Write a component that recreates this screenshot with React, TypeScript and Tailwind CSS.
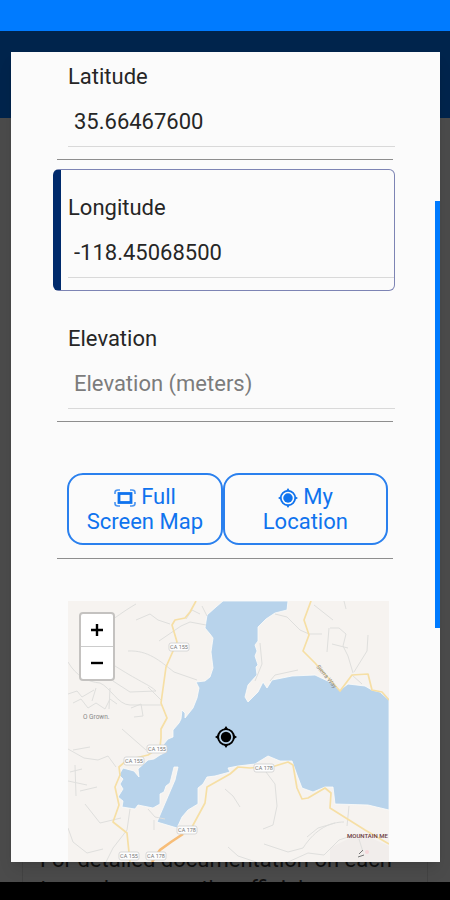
import { useState } from "react";
import type { InputHTMLAttributes } from "react";

const ROADS = [
  "M128 0L122 11L117 17L107 19L104 24L109 41L98 66L93 102L99 117L93 128L93 137L92 146L80 154L59 159L51 166L52 174L47 186L51 204L45 221L59 232L62 261",
  "M115 233L124 226L137 202L139 186L162 173L170 166L182 167L207 165L220 161L225 164L229 187L234 198L240 197L257 187L263 192L262 207L297 229L321 243",
  "M243 0L236 19L241 34L235 50L247 62L272 90L284 74L300 73L304 89L314 91L321 99",
];

const TRAILS = [
  "M38 22C48 17 54 11 68 3M44 63C70 80 82 84 88 90L62 91L45 80M0 61C8 75 20 81 32 82C42 86 50 104 62 104L93 104",
  "M60 50C80 49 92 60 106 71L129 79M68 19L82 13L90 19L102 23M91 40L113 25L122 21L138 24M80 86L93 99M118 18L124 9L132 13M134 5L139 15",
  "M0 93L9 90L14 96L26 89M5 102L13 98L20 107L28 102L37 108L42 98L49 103M28 87L24 100M42 87L41 108M63 107L73 103L75 115L66 116",
  "M0 148L16 157L30 159L40 155L48 166M54 128L78 149M17 203L32 222L53 217M62 208L59 229L45 247L38 261M0 227L5 241L19 252L35 248",
  "M7 164L8 195M0 180L19 184M2 171L14 168M12 190L29 186M5 149L22 146",
  "M207 13L219 16L232 29L241 33L254 33M246 4L265 19M276 0L278 8M262 27H271L278 33L275 45L280 55L285 72M264 43L280 47M300 34L299 50L286 71M261 27L259 51",
  "M202 80L207 74L230 69M192 42L194 63L187 80M284 74L294 83",
  "M157 188L165 195L172 206M198 171L207 183L209 205L205 224L195 228M196 243L220 251L235 247C248 227 263 221 276 221",
  "M239 236L250 227L267 222M281 205L279 225M220 261L240 252L256 254L271 239L286 234M160 246L170 255L188 261M291 238L295 251M80 208L87 216L97 218M86 219L86 229",
];

const WATER =
  "M155 0L148 6L139 14L137 27L142 33L145 37L143 51L145 67L142 76L137 80L128 81L131 87L129 97L125 107L121 112L117 117L117 112L114 109L113 118L111 122L105 129L105 136L100 138L95 144L98 151L92 154L86 158L80 159L70 168L71 176L66 170L55 167L51 174L55 178L52 183L55 188L50 196L55 200L54 206L67 208L70 204L85 207L92 203L92 193L96 191L98 185L102 182L106 166L110 166L107 179L95 207L89 221L109 227L114 216L120 209L130 203L130 187L135 183L139 176L147 175L162 171L160 167L170 165L187 163L200 155L212 160L224 160L229 174L234 187L245 191L257 186L265 186L267 203L300 204L321 209V99L312 91L304 89L297 85L280 83L272 89L264 82L247 74L224 75L204 79L199 87L195 81L190 91L180 101L177 96L180 84L189 74L188 66L190 64L187 55L189 50L187 44L190 40L190 26L198 18L207 12L219 9L220 0Z";

const SHIELDS = [
  { x: 111, y: 46, name: "CA 155" },
  { x: 89, y: 148, name: "CA 155" },
  { x: 66, y: 160, name: "CA 155" },
  { x: 119, y: 229, name: "CA 178" },
  { x: 196, y: 167, name: "CA 178" },
  { x: 61, y: 255, name: "CA 155" },
  { x: 88, y: 255, name: "CA 178" },
];

interface CoordinateFieldProps extends InputHTMLAttributes<HTMLInputElement> {
  id: string;
  label: string;
}

const CoordinateField = ({ id, label, ...props }: CoordinateFieldProps) => (
  <div className="flex flex-col">
    <label htmlFor={id} className="pt-0.5 text-[22px] leading-8">
      {label}
    </label>
    <input
      id={id}
      className="mt-1 h-[50px] w-full border-b border-[#d9d9d9] bg-transparent px-1.5 text-[22px] outline-none placeholder:text-[#7c7c7c]"
      {...props}
    />
  </div>
);

const FullScreenIcon = () => (
  <svg className="inline h-5 w-[22px] align-[-4px]" viewBox="0 0 22 20" fill="none" stroke="currentColor">
    <path
      strokeWidth="1.6"
      strokeOpacity="0.75"
      d="M1 6V4.5Q1 2 4 2H6M16 2H18Q21 2 21 4.5V6M21 14V15.5Q21 18 18 18H16M6 18H4Q1 18 1 15.5V14"
    />
    <rect x="5" y="5.5" width="12" height="9" strokeWidth="2.8" />
  </svg>
);

const LocateIcon = ({ className }: { className: string }) => (
  <svg className={className} viewBox="0 0 22 22" fill="currentColor">
    <circle cx="11" cy="11" r="7.9" fill="none" stroke="currentColor" strokeWidth="1.9" />
    <circle cx="11" cy="11" r="5.2" />
    <path d="M11 0L13 3H9ZM11 22L9 19H13ZM0 11L3 9V13ZM22 11L19 13V9Z" />
  </svg>
);

const LakeMap = () => {
  const [zoom, setZoom] = useState(12);

  return (
    <div className="relative overflow-hidden">
      <svg className="block w-full" viewBox="0 0 321 264" role="img" aria-label={`Map, zoom ${zoom}`}>
        <rect width="321" height="264" fill="#f6f3f0" />
        <path d="M262 247L280 238L292 232L321 245V264H262Z" fill="#f1edeb" />
        <path d={WATER} fill="#b8d3eb" stroke="#fdfcfa" strokeWidth="0.8" />
        {TRAILS.map((d) => (
          <path key={d} d={d} fill="none" stroke="#dfdfdd" strokeWidth="1" />
        ))}
        {ROADS.map((d) => (
          <path key={d} d={d} fill="none" stroke="#f6dfa5" strokeWidth="1.7" strokeLinejoin="round" />
        ))}
        <path d="M84 261L92 249L103 241L115 233" fill="none" stroke="#f7bd78" strokeWidth="2.6" />
        {SHIELDS.map((s) => (
          <g key={`${s.x}-${s.y}`}>
            <rect x={s.x - 10} y={s.y - 4} width="20" height="8" rx="2" fill="#fdfdfd" stroke="#cfcfcf" strokeWidth="0.8" />
            <text x={s.x} y={s.y + 2} textAnchor="middle" fontSize="5.5" fill="#777">
              {s.name}
            </text>
          </g>
        ))}
        <text x="15" y="118" fontSize="6.5" fill="#888">
          O Grown.
        </text>
        <text transform="translate(248 66) rotate(50)" fontSize="6" fill="#888">
          Sierra Way
        </text>
        <text x="279" y="237" fontSize="6" fontWeight="500" fill="#6b3a40">
          MOUNTAIN ME
        </text>
        <path d="M291 253L295 249M290 256L296 254" stroke="#777" strokeWidth="1" />
        <circle cx="299" cy="251" r="2" fill="#f6d6da" />
      </svg>

      <div className="absolute top-[11px] left-[11px] flex flex-col rounded-sm border-2 border-[#c4c2c0] bg-white text-black">
        <button
          aria-label="Zoom in"
          onClick={() => setZoom(zoom + 1)}
          className="flex h-[33px] w-8 items-center justify-center border-b border-[#cccccc]"
        >
          <svg className="h-3 w-3" viewBox="0 0 12 12" stroke="currentColor" strokeWidth="2.4">
            <path d="M6 0V12M0 6H12" />
          </svg>
        </button>
        <button
          aria-label="Zoom out"
          onClick={() => setZoom(zoom - 1)}
          className="flex h-8 w-8 items-center justify-center"
        >
          <svg className="h-3 w-3" viewBox="0 0 12 12" stroke="currentColor" strokeWidth="2.4">
            <path d="M0 6H12" />
          </svg>
        </button>
      </div>

      {/* Selected position */}
      <LocateIcon className="absolute top-[125px] left-[147px] h-[22px] w-[22px] text-black" />
    </div>
  );
};

const App = () => {
  const [latitude, setLatitude] = useState("35.66467600");
  const [longitude, setLongitude] = useState("-118.45068500");
  const [elevation, setElevation] = useState("");

  return (
    <div className="relative flex min-h-screen flex-col overflow-hidden bg-[#4b4b4b] font-['Roboto',sans-serif] text-[#262626]">
      <div className="h-[31px] bg-[#007bff]" />
      <header className="h-[87px] bg-[#00244c]" />

      {/* Page behind the dialog */}
      <main className="flex grow flex-col justify-end px-[22px]">
        <div className="h-[37px] overflow-hidden border-x border-[#434343] px-[17px] text-[22px] leading-[29px] whitespace-nowrap text-[#111111]">
          <p>For detailed documentation on each</p>
          <p>type, please see the official</p>
        </div>
      </main>
      <footer className="h-[18px] bg-black" />

      {/* Dialog */}
      <section
        role="dialog"
        aria-label="Location"
        className="absolute top-[52px] right-2.5 bottom-[38px] left-[11px] overflow-hidden bg-[#fbfbfb] shadow-lg"
      >
        <form className="pr-[45px] pl-[42px]" onSubmit={(e) => e.preventDefault()}>
          <div className="pt-[7px] pl-[15px]">
            <CoordinateField
              id="latitude"
              label="Latitude"
              value={latitude}
              onChange={(e) => setLatitude(e.target.value)}
            />
          </div>
          <hr className="mt-3 mr-0.5 ml-1 border-[#8e8e8e]" />

          <div className="mt-[9px] rounded-md border border-l-8 border-[#7d84b4] border-l-[#002a6c] pt-5 pb-3 pl-[7px]">
            <CoordinateField
              id="longitude"
              label="Longitude"
              value={longitude}
              onChange={(e) => setLongitude(e.target.value)}
            />
          </div>

          <div className="mt-[30px] pl-[15px]">
            <CoordinateField
              id="elevation"
              label="Elevation"
              placeholder="Elevation (meters)"
              value={elevation}
              onChange={(e) => setElevation(e.target.value)}
            />
          </div>
          <hr className="mt-3 mr-0.5 ml-1 border-[#8e8e8e]" />

          <div className="mt-[51px] mr-[7px] ml-3.5 flex text-[22px] leading-[25px] text-[#0f73ee]">
            <button className="w-[48.5%] rounded-2xl border-2 border-[#2a80ee] px-2 py-[9px]">
              <FullScreenIcon /> Full
              <br />
              Screen Map
            </button>
            <button className="grow rounded-2xl border-2 border-[#2a80ee] px-2 py-[9px]">
              <LocateIcon className="inline h-5 w-5 align-[-4px]" /> My
              <br />
              Location
            </button>
          </div>
          <hr className="mt-[13px] mr-0.5 ml-1 border-[#8e8e8e]" />

          <div className="mt-[42px] mr-1.5 ml-[15px]">
            <LakeMap />
          </div>
        </form>

        {/* Scroll thumb */}
        <div className="absolute top-[149px] right-0 h-[427px] w-[5px] bg-[#007bff]" />
      </section>
    </div>
  );
};

export default App;
